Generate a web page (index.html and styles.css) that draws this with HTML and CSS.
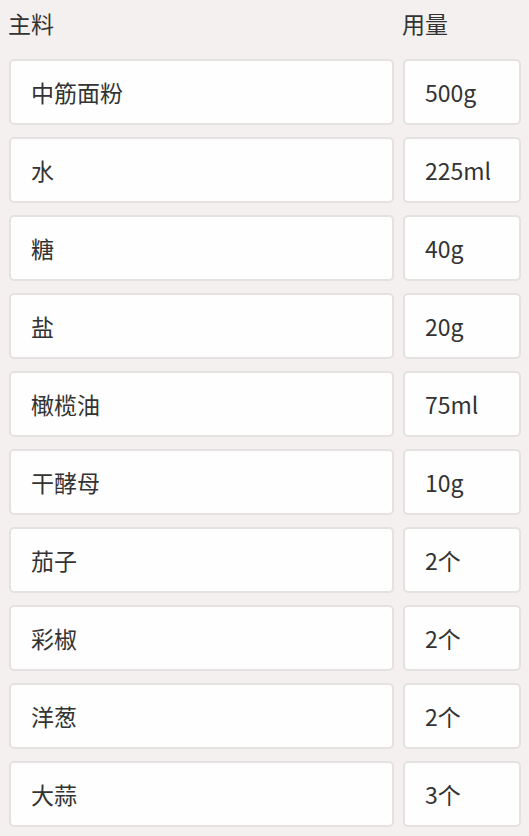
FILE: index.html
```html
<!DOCTYPE html>
<html lang="zh">
<head>
<meta charset="utf-8">
<link rel="stylesheet" href="styles.css">
</head>
<body>
<div class="table">
  <div class="head">主料</div><div class="head">用量</div>
  <div class="cell">中筋面粉</div><div class="cell">500g</div>
  <div class="cell">水</div><div class="cell">225ml</div>
  <div class="cell">糖</div><div class="cell">40g</div>
  <div class="cell">盐</div><div class="cell">20g</div>
  <div class="cell">橄榄油</div><div class="cell">75ml</div>
  <div class="cell">干酵母</div><div class="cell">10g</div>
  <div class="cell">茄子</div><div class="cell">2个</div>
  <div class="cell">彩椒</div><div class="cell">2个</div>
  <div class="cell">洋葱</div><div class="cell">2个</div>
  <div class="cell">大蒜</div><div class="cell">3个</div>
</div>
</body>
</html>
```
FILE: styles.css
```css
html, body {
  margin: 0;
  padding: 0;
  background: #f3f0ef;
}
body {
  font-family: "Noto Sans CJK SC", "Noto Sans", sans-serif;
  color: #333;
}
.table {
  display: grid;
  grid-template-columns: 385px 118px;
  column-gap: 9px;
  row-gap: 12px;
  padding: 0 8px 0 9px;
}
.head {
  height: 47px;
  display: flex;
  align-items: center;
  font-size: 23px;
  line-height: 1;
  margin-left: -1px;
  padding-bottom: 0;
}
.cell {
  height: 62px;
  box-sizing: content-box;
  background: #fefefe;
  border: 2px solid #e4e1e0;
  border-radius: 5px;
  display: flex;
  align-items: center;
  padding-left: 20px;
  font-size: 23px;
  line-height: 1;
}
```
